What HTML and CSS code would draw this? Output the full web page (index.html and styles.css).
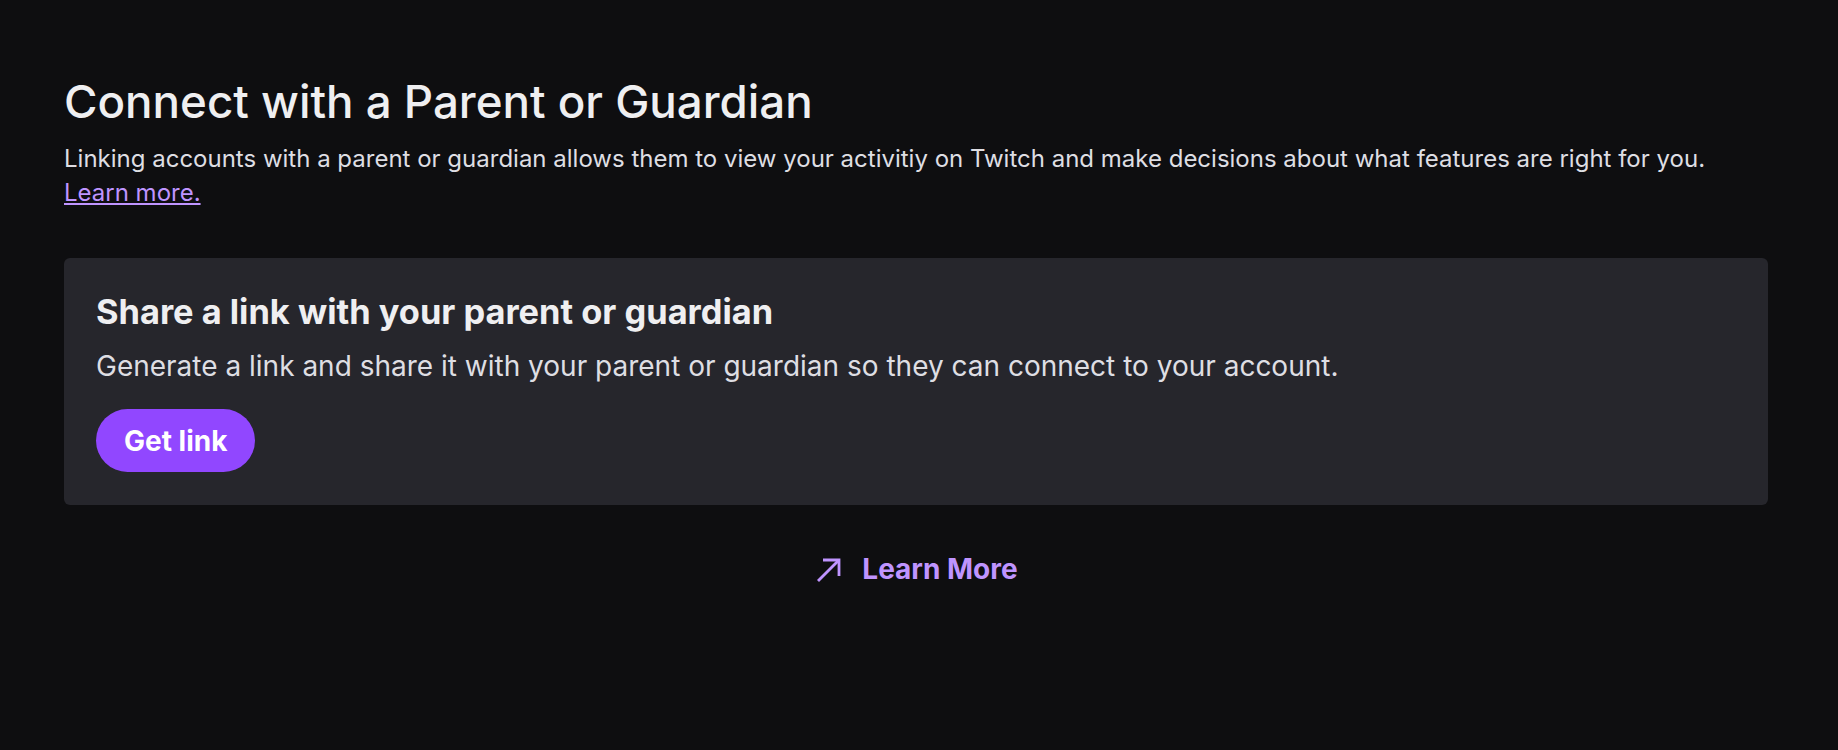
FILE: index.html
```html
<!DOCTYPE html>
<html lang="en">
<head>
  <meta charset="UTF-8">
  <meta name="viewport" content="width=device-width, initial-scale=1.0">
  <title>Connect with a Parent or Guardian</title>
  <link rel="stylesheet" href="styles.css">
</head>
<body>
  <div class="container">
    <header class="intro">
      <h1>Connect with a Parent or Guardian</h1>
      <p>Linking accounts with a parent or guardian allows them to view your activitiy on Twitch and make decisions about what features are right for you. <a href="#" class="text-link">Learn more.</a></p>
    </header>

    <section class="card">
      <h2>Share a link with your parent or guardian</h2>
      <p>Generate a link and share it with your parent or guardian so they can connect to your account.</p>
      <button class="btn-primary">Get link</button>
    </section>

    <div class="learn-more">
      <a href="#">
        <svg width="30" height="30" viewBox="0 0 30 30" fill="none" stroke="currentColor" stroke-width="2.8">
          <path d="M4 27 L24 7" />
          <path d="M9 6 H25 V22" />
        </svg>
        <span>Learn More</span>
      </a>
    </div>
  </div>
</body>
</html>
```

FILE: styles.css
```css
:root {
  --background-color: #0e0e10;
  --card-background: #26262c;
  --text-color: #efeff1;
  --text-alt: #dedee3;
  --primary-color: #9147ff;
  --link-color: #bf94ff;
}

* {
  margin: 0;
  padding: 0;
  box-sizing: border-box;
}

body {
  font-family: Inter, 'Noto Sans', sans-serif;
  background-color: var(--background-color);
  color: var(--text-color);
}

.container {
  width: 1704px;
  margin-left: 64px;
  padding-top: 74px;
}

.intro h1 {
  font-size: 45.7px;
  line-height: 56px;
  font-weight: 500;
  margin-bottom: 12px;
}

.intro p {
  font-size: 24px;
  line-height: 34px;
  color: var(--text-alt);
}

.text-link {
  color: var(--link-color);
}

.card {
  margin-top: 48px;
  background-color: var(--card-background);
  border-radius: 6px;
  padding: 32px 32px 33px;
}

.card h2 {
  font-size: 34.4px;
  line-height: 44px;
  font-weight: 700;
  margin-bottom: 14px;
}

.card p {
  font-size: 28px;
  line-height: 36px;
  color: var(--text-alt);
  margin-bottom: 25px;
}

.btn-primary {
  background-color: var(--primary-color);
  color: white;
  border: none;
  border-radius: 32px;
  height: 63px;
  padding: 0 28px;
  font-family: inherit;
  font-size: 28px;
  font-weight: 700;
  cursor: pointer;
}

.learn-more {
  display: flex;
  justify-content: center;
  margin-top: 46px;
}

.learn-more a {
  display: flex;
  align-items: center;
  gap: 18px;
  line-height: 36px;
  color: var(--link-color);
  text-decoration: none;
  font-size: 28px;
  font-weight: 700;
}
```
